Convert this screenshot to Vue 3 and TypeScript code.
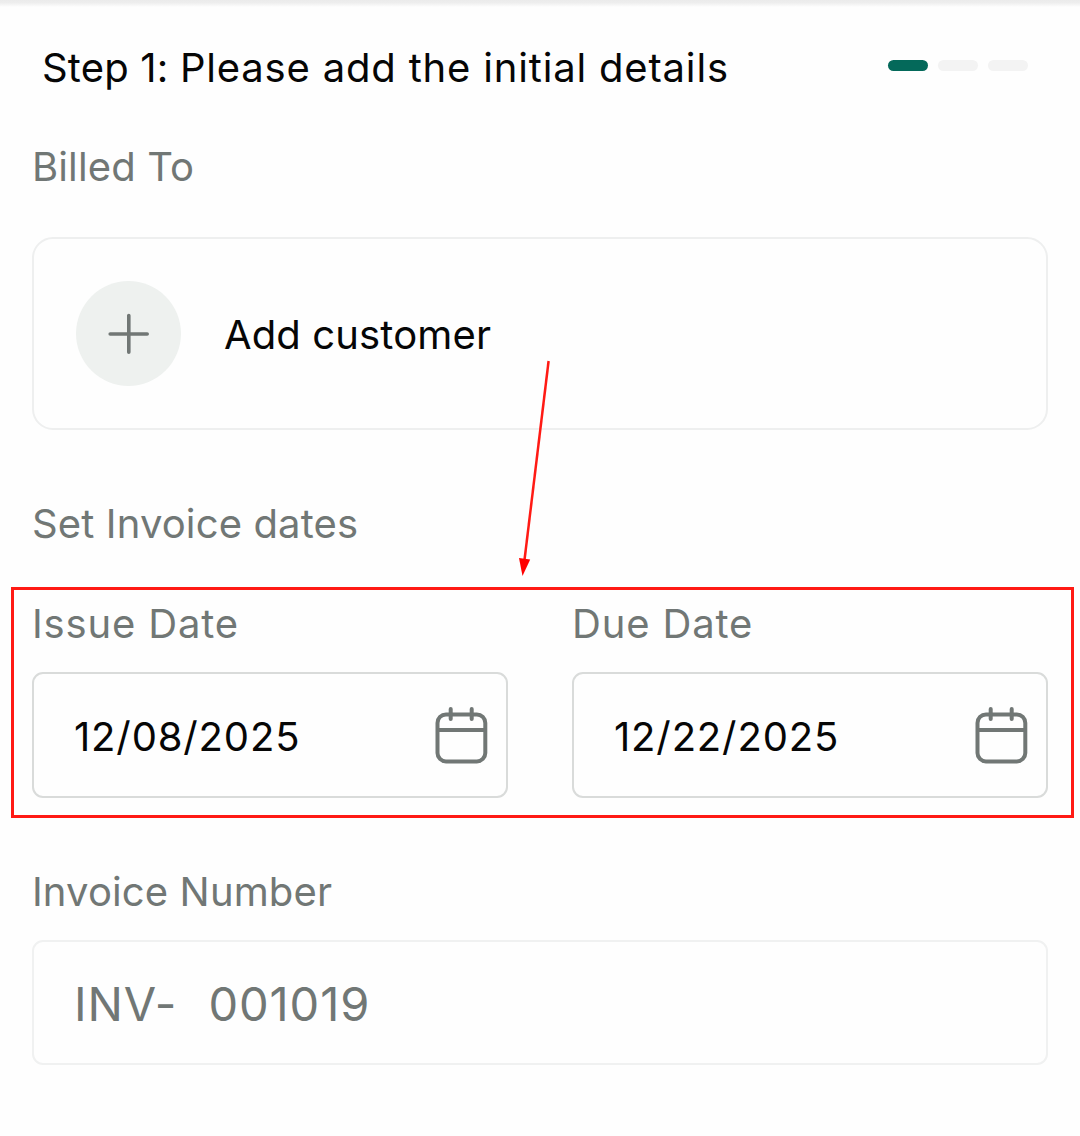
<script setup lang="ts">
interface DateField {
  label: string
  value: string
}

const steps: boolean[] = [true, false, false]
const dateFields: DateField[] = [
  { label: 'Issue Date', value: '12/08/2025' },
  { label: 'Due Date', value: '12/22/2025' },
]
</script>

<template>
  <main class="screen">
    <div class="top-shadow"></div>

    <header class="header">
      <h1 class="title"><span class="step-name">Step 1: </span>Please add the initial details</h1>
      <div class="steps">
        <span v-for="(active, i) in steps" :key="i" class="step" :class="{ active }"></span>
      </div>
    </header>

    <h2 class="label billed">Billed To</h2>
    <div class="customer">
      <span class="plus">
        <svg width="42" height="42" viewBox="0 0 42 42">
          <path d="M20.8 2.5V39.3M2.2 21H39.2" />
        </svg>
      </span>
      <span class="add">Add customer</span>
    </div>

    <h2 class="label set">Set Invoice dates</h2>
    <section class="dates">
      <div v-for="field in dateFields" :key="field.label" class="field">
        <div class="label date-label">{{ field.label }}</div>
        <div class="date-box">
          <span class="date-value">{{ field.value }}</span>
          <svg class="calendar" width="54" height="60" viewBox="0 0 54 60">
            <rect x="3.5" y="9.4" width="47.8" height="47" rx="8.5" />
            <path d="M3.5 25H51.3" />
            <path class="rings" d="M16.7 4V14M37.7 4V14" />
          </svg>
        </div>
      </div>
      <div class="highlight"></div>
    </section>

    <h2 class="label number-label">Invoice Number</h2>
    <div class="number-box">
      <span class="prefix">INV-</span>
      <span class="number">001019</span>
    </div>

    <svg class="arrow" width="50" height="230" viewBox="0 0 50 230">
      <path class="shaft" d="M38.6 11L14.5 210" />
      <path class="tip" d="M9 208L20.2 209.4L12.5 226Z" />
    </svg>
  </main>
</template>

<style>
body {
  margin: 0;
  background: #fefefe;
}
</style>

<style scoped>
.screen {
  position: relative;
  box-sizing: border-box;
  width: 1080px;
  height: 1136px;
  padding: 0 32px;
  overflow: hidden;
  background: #fefefe;
  color: #060606;
  font-family: Inter, "Liberation Sans", sans-serif;
  font-size: 40px;
  line-height: 48px;
}

.top-shadow {
  height: 7px;
  margin: 0 -32px;
  background: linear-gradient(#ebebeb 0, #eeeeee 40%, #fefefe 100%);
}

.header {
  display: flex;
  justify-content: space-between;
  align-items: center;
  height: 48px;
  margin-top: 37px;
  padding: 0 20px 0 10px;
}

.title,
.label {
  margin: 0;
  font-size: 40px;
  font-weight: 400;
  white-space: nowrap;
}

.title {
  letter-spacing: 0.82px;
}

.step-name {
  letter-spacing: 0.18px;
}

.label {
  height: 48px;
  color: #717775;
  letter-spacing: 0.13px;
}

.label.date-label {
  letter-spacing: 0.85px;
}

.steps {
  display: flex;
  gap: 10px;
  margin-bottom: 5px;
}

.step {
  width: 40px;
  height: 11px;
  border-radius: 6px;
  background: #f3f3f3;
}

.step.active {
  background: #04695a;
}

.billed {
  margin-top: 51px;
}

.customer {
  display: flex;
  align-items: center;
  box-sizing: border-box;
  height: 193px;
  margin-top: 46px;
  padding-left: 42px;
  border: 2px solid #eeefef;
  border-radius: 21px;
}

.plus {
  display: flex;
  align-items: center;
  justify-content: center;
  width: 105px;
  height: 105px;
  margin-right: 43px;
  border-radius: 50%;
  background: #eef1ef;
}

.plus svg {
  fill: none;
  stroke: #717775;
  stroke-width: 3.6;
  stroke-linecap: round;
}

.add {
  padding-top: 3px;
  letter-spacing: 0.13px;
}

.set {
  margin-top: 70px;
}

.dates {
  position: relative;
  display: flex;
  gap: 64px;
  margin-top: 52px;
}

.field {
  flex: 1;
}

.date-box {
  display: flex;
  align-items: center;
  justify-content: space-between;
  box-sizing: border-box;
  height: 126px;
  margin-top: 24px;
  padding: 0 18px 0 40px;
  border: 2px solid #d9dbda;
  border-radius: 11px;
}

.date-value {
  padding-top: 4px;
  letter-spacing: 0.85px;
}

.calendar {
  fill: none;
  stroke: #717775;
  stroke-width: 4;
}

.rings {
  stroke-linecap: round;
}

.highlight {
  position: absolute;
  top: -13px;
  right: -26px;
  bottom: -20px;
  left: -21px;
  border: 3px solid #ff1a14;
}

.number-label {
  margin-top: 70px;
}

.number-box {
  display: flex;
  align-items: center;
  box-sizing: border-box;
  height: 125px;
  margin-top: 24px;
  padding: 2px 0 0 40px;
  border: 2px solid #f0f1f1;
  border-radius: 11px;
  color: #717775;
  font-size: 47px;
  letter-spacing: 0.9px;
}

.prefix {
  width: 134.5px;
}

.arrow {
  position: absolute;
  top: 350px;
  left: 510px;
}

.shaft {
  fill: none;
  stroke: #ff1a14;
  stroke-width: 2.5;
}

.tip {
  fill: #ff0000;
}
</style>
